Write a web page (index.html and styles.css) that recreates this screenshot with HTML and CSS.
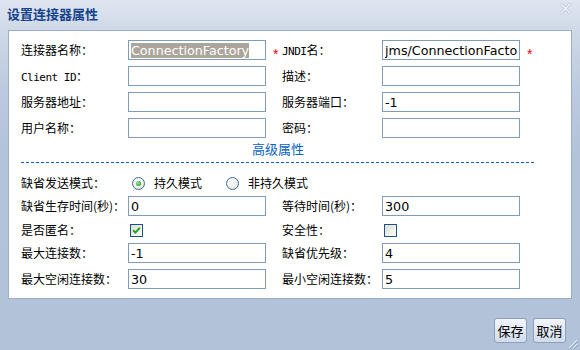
FILE: index.html
```html
<!DOCTYPE html>
<html lang="zh">
<head>
<meta charset="utf-8">
<title>设置连接器属性</title>
<link rel="stylesheet" href="styles.css">
</head>
<body>
<div class="window">
  <div class="titlebar">
    <span class="title">设置连接器属性</span>
    <svg class="close" width="11" height="11" viewBox="0 0 11 11">
      <path d="M1 1 L10 10 M10 1 L1 10" stroke="#b4c2d5" stroke-width="2.6" stroke-linecap="round"/>
      <path d="M1 1 L10 10 M10 1 L1 10" stroke="#f4f7fb" stroke-width="1.4" stroke-linecap="round"/>
    </svg>
  </div>
  <div class="panel">
    <div class="grid top">
      <span class="lbl">连接器名称：</span>
      <div class="field"><span class="sel">ConnectionFactory</span></div>
      <span class="req">*</span>
      <span class="lbl"><span class="mono">JNDI</span>名：</span>
      <input class="field" value="jms/ConnectionFactory">
      <span class="req">*</span>

      <span class="lbl"><span class="mono">Client ID</span>：</span>
      <input class="field" value="">
      <span></span>
      <span class="lbl">描述：</span>
      <input class="field" value="">
      <span></span>

      <span class="lbl">服务器地址：</span>
      <input class="field" value="">
      <span></span>
      <span class="lbl">服务器端口：</span>
      <input class="field" value="-1">
      <span></span>

      <span class="lbl">用户名称：</span>
      <input class="field" value="">
      <span></span>
      <span class="lbl">密码：</span>
      <input class="field" value="">
      <span></span>
    </div>

    <div class="advanced"><a class="link">高级属性</a></div>
    <div class="dashed"></div>

    <div class="grid bottom">
      <span class="lbl">缺省发送模式：</span>
      <div class="radios">
        <span class="radio on"></span><span class="rtext">持久模式</span>
        <span class="radio"></span><span class="rtext">非持久模式</span>
      </div>

      <span class="lbl">缺省生存时间(秒)：</span>
      <input class="field" value="0">
      <span></span>
      <span class="lbl">等待时间(秒)：</span>
      <input class="field" value="300">
      <span></span>

      <span class="lbl">是否匿名：</span>
      <div class="cell"><span class="check on"><svg width="11" height="11" viewBox="0 0 11 11"><path d="M2.2 5.2 L4.4 7.6 L8.8 2.8" fill="none" stroke="#22a322" stroke-width="2"/></svg></span></div>
      <span></span>
      <span class="lbl">安全性：</span>
      <div class="cell"><span class="check"></span></div>
      <span></span>

      <span class="lbl">最大连接数：</span>
      <input class="field" value="-1">
      <span></span>
      <span class="lbl">缺省优先级：</span>
      <input class="field" value="4">
      <span></span>

      <span class="lbl">最大空闲连接数：</span>
      <input class="field" value="30">
      <span></span>
      <span class="lbl">最小空闲连接数：</span>
      <input class="field" value="5">
      <span></span>
    </div>
  </div>
  <div class="footer">
    <button class="btn">保存</button>
    <button class="btn">取消</button>
  </div>
  <svg class="grip" width="12" height="12" viewBox="0 0 12 12">
    <path d="M11 3 L3 11 M11 7 L7 11" stroke="#eef3f9" stroke-width="1"/>
    <path d="M12 4 L4 12 M12 8 L8 12" stroke="#8fa4c2" stroke-width="1"/>
  </svg>
</div>
</body>
</html>
```

FILE: styles.css
```css
* { box-sizing: border-box; }
html, body { margin: 0; padding: 0; }
body {
  width: 580px;
  height: 350px;
  overflow: hidden;
  font-family: "Noto Sans CJK SC", sans-serif;
  font-size: 12px;
  color: #000;
}
.window {
  position: relative;
  width: 580px;
  height: 350px;
  background: linear-gradient(180deg, #dfe6f0 0, #cfd9e7 28px, #bccadf 90px, #b3c3da 150px, #b2c2d9 100%);
}
.titlebar {
  height: 30px;
  display: flex;
  justify-content: space-between;
  align-items: flex-start;
  padding: 0 9px 0 7px;
}
.title {
  font-weight: bold;
  font-size: 13px;
  line-height: 16px;
  padding-top: 6px;
  color: #15428b;
}
.close { margin-top: 3px; }
.panel {
  margin: 0 8px;
  height: 269px;
  background: #fff;
  border: 1px solid #99aecd;
  padding: 9px 36px 0 12px;
}
.grid {
  display: grid;
  grid-template-columns: 107px 138px 16px 100px 138px 1fr;
}
.grid.top {
  grid-template-rows: repeat(4, 20px);
  row-gap: 6px;
}
.grid.bottom {
  margin-top: 10px;
  grid-template-rows: 20px 23px 24px 23px 26px;
  align-items: end;
}
.lbl {
  height: 20px;
  line-height: 20px;
  white-space: nowrap;
  font-size: 12px;
}
.mono {
  font-family: "DejaVu Sans Mono", monospace;
  font-size: 11px;
  letter-spacing: -0.5px;
}
.field {
  width: 138px;
  height: 20px;
  border: 1px solid #7f9db9;
  padding: 0 2px;
  margin: 0;
  font-family: "DejaVu Sans", sans-serif;
  font-size: 12.7px;
  line-height: 18px;
  color: #000;
  background: #fff;
  outline: none;
  display: block;
}
div.field { display: flex; align-items: center; }
.sel {
  background: #aaa69b;
  color: #fff;
  line-height: 15px;
  height: 15px;
  display: inline-block;
}
.req {
  color: #e00;
  font-family: "Liberation Sans", sans-serif;
  font-size: 14px;
  line-height: 14px;
  padding-left: 7px;
  padding-top: 7px;
  height: 20px;
}
.advanced {
  margin-top: 2px;
  height: 17px;
  line-height: 17px;
  text-align: center;
  font-size: 13px;
}
.link { color: #0b63c4; cursor: pointer; }
.dashed {
  margin-top: 5px;
  height: 1px;
  background: repeating-linear-gradient(to right, #1a60bd 0 3px, transparent 3px 5px);
}
.radios {
  grid-column: 2 / 7;
  height: 20px;
  display: flex;
  align-items: center;
  padding-left: 4px;
}
.radio {
  width: 13px;
  height: 13px;
  border-radius: 50%;
  border: 1px solid #3d6c99;
  background: radial-gradient(circle at 40% 35%, #ffffff 0, #f1f1ec 50%, #d6d6cf 100%);
  display: flex;
  align-items: center;
  justify-content: center;
}
.radio.on::after {
  content: "";
  width: 5px;
  height: 5px;
  border-radius: 50%;
  background: radial-gradient(circle at 40% 40%, #a9ecaa 0, #35b035 60%, #1f8f1f 100%);
}
.rtext {
  margin-left: 9px;
  margin-right: 24px;
  line-height: 20px;
}
.cell {
  height: 20px;
  display: flex;
  align-items: center;
  padding-left: 2px;
}
.check {
  width: 13px;
  height: 13px;
  border: 1px solid #1f5181;
  background: linear-gradient(135deg, #dcdcd5 0, #f5f5f1 70%, #ffffff 100%);
  display: flex;
  align-items: center;
  justify-content: center;
}
.check svg { display: block; }
.footer {
  height: 51px;
  display: flex;
  justify-content: flex-end;
  align-items: flex-start;
  gap: 6px;
  padding: 19px 14px 0 0;
}
.btn {
  width: 33px;
  height: 25px;
  padding: 0;
  margin: 0;
  border: 1px solid #8ba0bf;
  border-radius: 3px;
  background: linear-gradient(180deg, #f3f6fb 0, #e3eaf4 45%, #d2dcea 100%);
  font-family: "Noto Sans CJK SC", sans-serif;
  font-size: 13px;
  color: #000;
  line-height: 23px;
}
.grip {
  position: absolute;
  right: 2px;
  bottom: 1px;
}
```
